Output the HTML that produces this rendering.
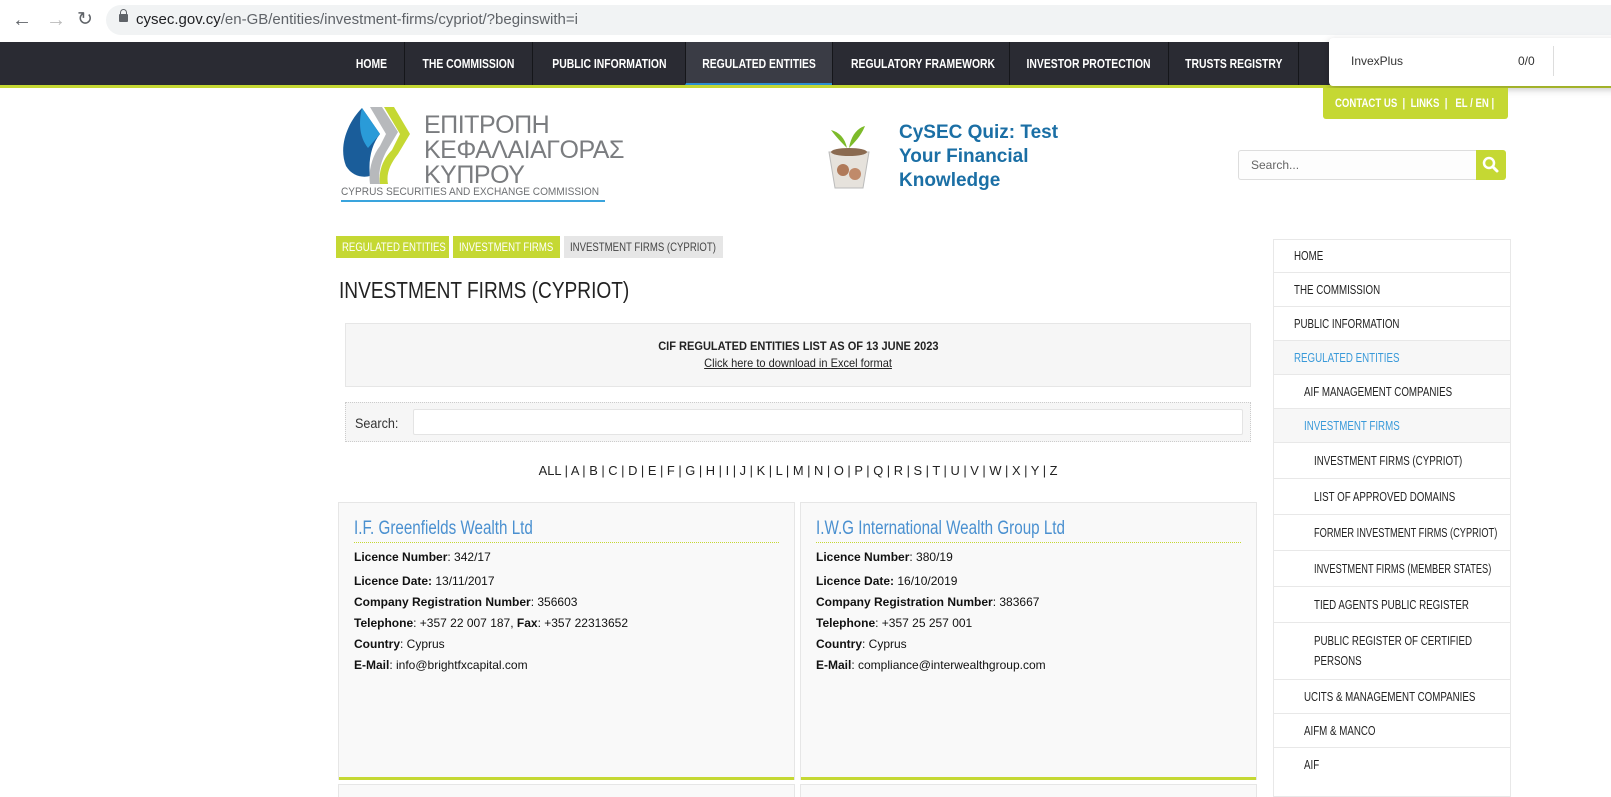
<!DOCTYPE html>
<html style="height:797px;overflow:hidden"><head><meta charset="utf-8"><style>
*{box-sizing:border-box;margin:0;padding:0}
body{width:1611px;height:797px;overflow:hidden;background:#fff;font-family:"Liberation Sans",Arial,sans-serif;position:relative;color:#222}
.a{position:absolute}
.c{display:inline-block;white-space:nowrap;transform:scaleX(.8);transform-origin:0 50%}
.cc{display:inline-block;white-space:nowrap;transform:scaleX(.8);transform-origin:50% 50%}
#bar{left:0;top:0;width:1611px;height:40px;background:#fff}
#url{left:106px;top:5px;width:1505px;height:30px;background:#f1f3f4;border-radius:15px 0 0 15px}
#nav{left:0;top:42px;width:1611px;height:43px;background:#2a2b33}
#gl{left:0;top:85px;width:1611px;height:3px;background:#c5d833}
.ni{position:absolute;top:42px;height:43px;line-height:43px;color:#fff;font-size:13px;font-weight:bold;text-align:center;border-left:1px solid #15161a;overflow:hidden;white-space:nowrap}
#pop{left:1329px;top:38px;width:290px;height:48px;background:#fff;box-shadow:0 3px 8px rgba(0,0,0,.25);border-radius:4px 0 0 4px}
.side{position:absolute;left:1273px;width:238px;border:1px solid #e8e8e8;border-top:none;font-size:12.5px;color:#222;display:flex;align-items:center;overflow:hidden}
.side .c{transform:scaleX(.78)}
.card{position:absolute;top:502px;width:457px;height:278px;background:#f9f9f9;border:1px solid #e6e6e6;border-bottom:none}
.card .g{position:absolute;left:0;right:0;bottom:0;height:3px;background:#c5d833}
.card h3{position:absolute;left:15px;top:15px;font-weight:normal;font-size:19px;color:#4a90d0;width:425px;height:25px;border-bottom:1px dotted #c5d833;white-space:nowrap}
.card p{position:absolute;left:15px;font-size:12px;color:#111;white-space:nowrap}
.bc{position:absolute;top:236px;height:22px;font-size:12px;line-height:22px;padding-left:6px;overflow:hidden}
</style></head><body>
<div id="bar" class="a"></div>
<div class="a" style="left:12px;top:9px;font-size:20px;color:#5f6368">&#8592;</div>
<div class="a" style="left:46px;top:9px;font-size:20px;color:#bbb">&#8594;</div>
<div class="a" style="left:77px;top:8px;font-size:19px;color:#5f6368">&#8635;</div>
<div id="url" class="a"></div>
<div class="a" style="left:119px;top:14px;width:9px;height:8px;background:#5f6368;border-radius:1px"></div>
<div class="a" style="left:120px;top:9px;width:7px;height:7px;border:1.5px solid #5f6368;border-radius:4px 4px 0 0"></div>
<div class="a" style="left:136px;top:11px;font-size:15px;color:#202124">cysec.gov.cy<span style="color:#5f6368">/en-GB/entities/investment-firms/cypriot/?beginswith=i</span></div>
<div id="nav" class="a"></div>
<div class="ni" style="left:339px;width:65px;border-left:none"><span class="cc">HOME</span></div>
<div class="ni" style="left:404px;width:128px"><span class="cc">THE COMMISSION</span></div>
<div class="ni" style="left:532px;width:153px"><span class="cc">PUBLIC INFORMATION</span></div>
<div class="ni" style="left:685px;width:147px;background:#3a3c45;border-bottom:2px solid #2c8fd0"><span class="cc">REGULATED ENTITIES</span></div>
<div class="ni" style="left:832px;width:177px"><span class="cc">REGULATORY FRAMEWORK</span></div>
<div class="ni" style="left:1009px;width:159px"><span class="cc">INVESTOR PROTECTION</span></div>
<div class="ni" style="left:1168px;width:130px"><span class="cc">TRUSTS REGISTRY</span></div>
<div class="ni" style="left:1298px;width:30px"></div>
<div id="gl" class="a"></div>
<div id="pop" class="a"><span class="a" style="left:22px;top:16px;font-size:12px;color:#333">InvexPlus</span><span class="a" style="left:189px;top:16px;font-size:12px;color:#333">0/0</span><span class="a" style="left:224px;top:8px;width:1px;height:30px;background:#ddd"></span></div>
<div class="a" style="left:1323px;top:88px;width:185px;height:31px;background:#c5d833;border-radius:0 0 3px 3px;color:#fff;font-size:12px;font-weight:bold;line-height:30px;padding-left:12px"><span class="c">CONTACT US &nbsp;| &nbsp;LINKS &nbsp;| &nbsp; EL / EN |</span></div>
<div class="a" style="left:1238px;top:150px;width:238px;height:30px;border:1px solid #ddd;border-right:none;border-radius:3px 0 0 3px;background:#fdfdfd;font-size:12px;color:#666;line-height:28px;padding-left:12px">Search...</div>
<div class="a" style="left:1476px;top:150px;width:30px;height:30px;background:#c5d833;border-radius:0 3px 3px 0"><svg width="30" height="30"><circle cx="13" cy="13" r="5" fill="none" stroke="#fff" stroke-width="2.5"/><line x1="17" y1="17" x2="21" y2="21" stroke="#fff" stroke-width="3" stroke-linecap="round"/></svg></div>
<svg class="a" style="left:340px;top:104px" width="70" height="80"><path d="M22 4 C8 18 -2 42 6 62 C12 72 22 74 30 72 C28 55 32 40 40 30 Z" fill="#1a5d9a"/><path d="M22 4 L40 30 L28 44 C20 34 18 20 22 4Z" fill="#2a9bd8"/><path d="M30 3 L42 3 L58 28 L46 48 C40 60 38 70 40 80 L30 80 C28 68 32 52 40 42 L46 30 Z" fill="#b7b9bc"/><path d="M44 3 L54 3 L70 30 L58 50 C50 60 46 70 48 80 L40 80 C38 66 44 54 52 46 L60 30Z" fill="#c5d833"/></svg>
<div class="a" style="left:424px;top:113px;font-size:25px;line-height:25px;color:#7a7c7f;letter-spacing:-.5px;white-space:nowrap">ΕΠΙΤΡΟΠΗ<br>ΚΕΦΑΛΑΙΑΓΟΡΑΣ<br>ΚΥΠΡΟΥ</div>
<div class="a" style="left:341px;top:186px;width:264px;height:16px;font-size:11px;color:#6e7073;border-bottom:2px solid #3aa4dd;white-space:nowrap"><span class="c" style="transform:scaleX(.92)">CYPRUS SECURITIES AND EXCHANGE COMMISSION</span></div>
<svg class="a" style="left:825px;top:118px" width="50" height="72"><path d="M22 30 C20 20 14 14 6 12 C12 20 16 24 22 30Z M24 30 C26 18 32 10 40 8 C36 18 30 24 24 30Z" fill="#7dbb2a"/><path d="M4 34 L44 34 L38 70 L10 70Z" fill="#e6e2dc" stroke="#bbb"/><circle cx="18" cy="52" r="6" fill="#b07a5a"/><circle cx="30" cy="56" r="6" fill="#c08a6a"/><ellipse cx="24" cy="34" rx="18" ry="4" fill="#8a6a50"/></svg>
<div class="a" style="left:899px;top:121px;font-size:19px;line-height:24px;font-weight:bold;color:#1b6fa5;white-space:nowrap">CySEC Quiz: Test<br>Your Financial<br>Knowledge</div>
<div class="bc" style="left:336px;width:113px;background:#c5d833;color:#fff"><span class="c">REGULATED ENTITIES</span></div>
<div class="bc" style="left:453px;width:107px;background:#c5d833;color:#fff"><span class="c">INVESTMENT FIRMS</span></div>
<div class="bc" style="left:564px;width:159px;background:#e6e6e6;color:#444"><span class="c">INVESTMENT FIRMS (CYPRIOT)</span></div>
<div class="a" style="left:339px;top:277px;font-size:23px;color:#222"><span class="c" style="transform:scaleX(.83)">INVESTMENT FIRMS (CYPRIOT)</span></div>
<div class="a" style="left:345px;top:323px;width:906px;height:64px;background:#f6f6f6;border:1px solid #e6e6e6;text-align:center">
<div style="margin-top:15px;font-size:12px;font-weight:bold"><span class="cc" style="transform:scaleX(.92)">CIF REGULATED ENTITIES LIST AS OF 13 JUNE 2023</span></div>
<div style="margin-top:3px;font-size:12px"><span class="cc" style="transform:scaleX(.92);text-decoration:underline">Click here to download in Excel format</span></div></div>
<div class="a" style="left:345px;top:402px;width:906px;height:40px;background:#f6f6f6;border:1px dotted #ccc">
<span class="a" style="left:9px;top:12px;font-size:14px;color:#333"><span class="c" style="transform:scaleX(.9)">Search:</span></span>
<div class="a" style="left:67px;top:6px;width:830px;height:26px;background:#fff;border:1px solid #e4e4e4;border-radius:2px"></div></div>
<div class="a" style="left:345px;top:463px;width:906px;text-align:center;font-size:13px;color:#222"><span class="cc" style="transform:scaleX(.99)">ALL | A | B | C | D | E | F | G | H | I | J | K | L | M | N | O | P | Q | R | S | T | U | V | W | X | Y | Z</span></div>
<div class="card" style="left:338px"><h3><span class="c">I.F. Greenfields Wealth Ltd</span></h3>
<p style="top:47px"><b>Licence Number</b>: 342/17</p>
<p style="top:71px"><b>Licence Date:</b> 13/11/2017</p>
<p style="top:92px"><b>Company Registration Number</b>: 356603</p>
<p style="top:113px"><b>Telephone</b>: +357 22 007 187, <b>Fax</b>: +357 22313652</p>
<p style="top:134px"><b>Country</b>: Cyprus</p>
<p style="top:155px"><b>E-Mail</b>: info@brightfxcapital.com</p><div class="g"></div></div>
<div class="card" style="left:800px"><h3><span class="c">I.W.G International Wealth Group Ltd</span></h3>
<p style="top:47px"><b>Licence Number</b>: 380/19</p>
<p style="top:71px"><b>Licence Date:</b> 16/10/2019</p>
<p style="top:92px"><b>Company Registration Number</b>: 383667</p>
<p style="top:113px"><b>Telephone</b>: +357 25 257 001</p>
<p style="top:134px"><b>Country</b>: Cyprus</p>
<p style="top:155px"><b>E-Mail</b>: compliance@interwealthgroup.com</p><div class="g"></div></div>
<div class="card" style="left:338px;top:784px;height:13px"></div>
<div class="card" style="left:800px;top:784px;height:13px"></div>
<div class="side" style="top:239px;height:34px;border-top:1px solid #e8e8e8;padding-left:20px"><span class="c">HOME</span></div>
<div class="side" style="top:273px;height:34px;padding-left:20px"><span class="c">THE COMMISSION</span></div>
<div class="side" style="top:307px;height:34px;padding-left:20px"><span class="c">PUBLIC INFORMATION</span></div>
<div class="side" style="top:341px;height:34px;padding-left:20px;background:#f7f7f7;color:#3a9ad9"><span class="c">REGULATED ENTITIES</span></div>
<div class="side" style="top:375px;height:34px;padding-left:30px"><span class="c">AIF MANAGEMENT COMPANIES</span></div>
<div class="side" style="top:409px;height:34px;padding-left:30px;background:#f7f7f7;color:#3a9ad9"><span class="c">INVESTMENT FIRMS</span></div>
<div class="side" style="top:443px;height:36px;padding-left:40px"><span class="c">INVESTMENT FIRMS (CYPRIOT)</span></div>
<div class="side" style="top:479px;height:36px;padding-left:40px"><span class="c">LIST OF APPROVED DOMAINS</span></div>
<div class="side" style="top:515px;height:36px;padding-left:40px"><span class="c" style="transform:scaleX(.74)">FORMER INVESTMENT FIRMS (CYPRIOT)</span></div>
<div class="side" style="top:551px;height:36px;padding-left:40px"><span class="c" style="transform:scaleX(.74)">INVESTMENT FIRMS (MEMBER STATES)</span></div>
<div class="side" style="top:587px;height:36px;padding-left:40px"><span class="c">TIED AGENTS PUBLIC REGISTER</span></div>
<div class="side" style="top:623px;height:57px;padding-left:40px;line-height:20px"><span class="c">PUBLIC REGISTER OF CERTIFIED<br>PERSONS</span></div>
<div class="side" style="top:680px;height:34px;padding-left:30px"><span class="c">UCITS &amp; MANAGEMENT COMPANIES</span></div>
<div class="side" style="top:714px;height:34px;padding-left:30px"><span class="c">AIFM &amp; MANCO</span></div>
<div class="side" style="top:748px;height:49px;padding-left:30px;align-items:flex-start;padding-top:10px"><span class="c">AIF</span></div>
</body></html>
